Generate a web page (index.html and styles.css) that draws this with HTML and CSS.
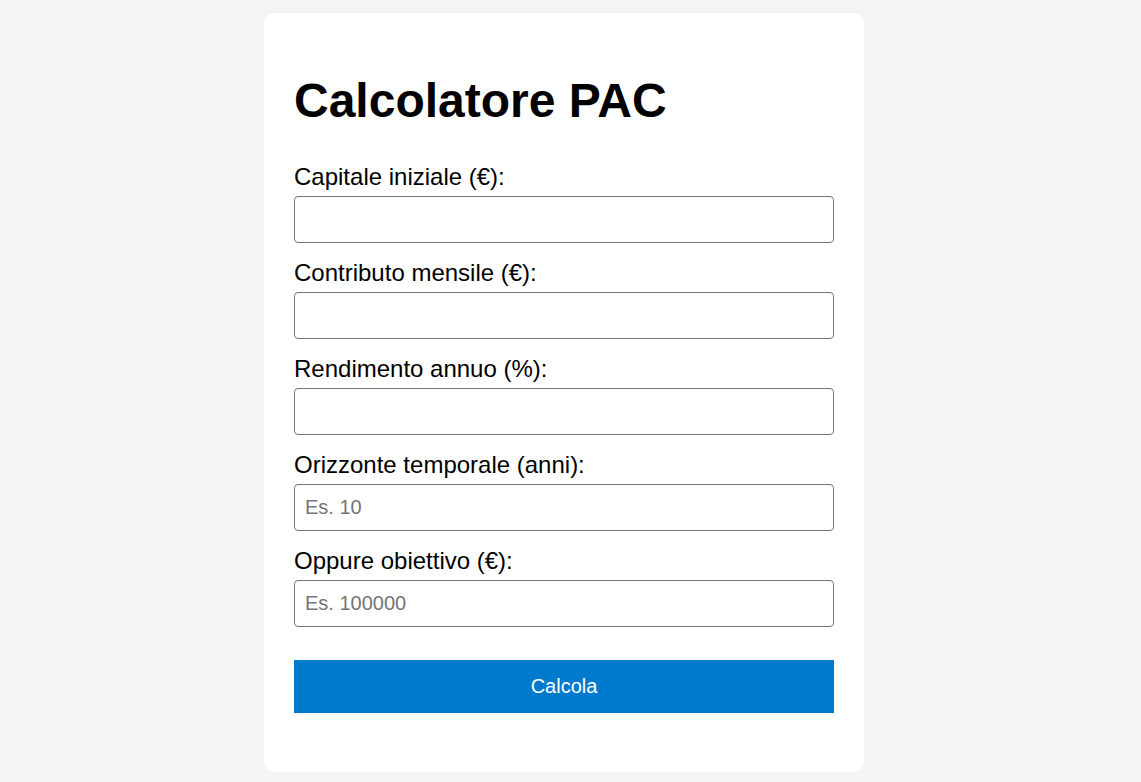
FILE: index.html
```html
<!DOCTYPE html>
<html lang="it">
<head>
<meta charset="utf-8">
<title>Calcolatore PAC</title>
<link rel="stylesheet" href="styles.css">
</head>
<body>
<main class="card">
  <h1 class="title">Calcolatore PAC</h1>
  <form class="form">
    <div class="field">
      <label class="label" for="capitale">Capitale iniziale (€):</label>
      <input class="input" id="capitale" type="number">
    </div>
    <div class="field">
      <label class="label" for="mensile">Contributo mensile (€):</label>
      <input class="input" id="mensile" type="number">
    </div>
    <div class="field">
      <label class="label" for="rendimento">Rendimento annuo (%):</label>
      <input class="input" id="rendimento" type="number">
    </div>
    <div class="field">
      <label class="label" for="anni">Orizzonte temporale (anni):</label>
      <input class="input" id="anni" type="number" placeholder="Es. 10">
    </div>
    <div class="field">
      <label class="label" for="obiettivo">Oppure obiettivo (€):</label>
      <input class="input" id="obiettivo" type="number" placeholder="Es. 100000">
    </div>
  </form>
  <button class="button" type="button">Calcola</button>
</main>
</body>
</html>
```

FILE: styles.css
```css
html, body {
  margin: 0;
  padding: 0;
}

body {
  background: #f4f4f4;
  font-family: "Liberation Sans", Arial, sans-serif;
  color: #000;
  padding: 13px 13px 0 0;
}

.card {
  box-sizing: border-box;
  width: 600px;
  margin: 0 auto;
  background: #ffffff;
  border-radius: 10px;
  padding: 30px 30px 30px;
}

.title {
  font-size: 48px;
  line-height: 55px;
  font-weight: bold;
  margin: 30px 0 35px;
}

.form {
  display: flex;
  flex-direction: column;
  gap: 16px;
}

.field {
  display: flex;
  flex-direction: column;
  gap: 5px;
}

.label {
  font-size: 24px;
  line-height: 28px;
}

.input {
  box-sizing: border-box;
  width: 100%;
  height: 47px;
  margin: 0;
  padding: 11px 10px;
  font-family: "Liberation Sans", Arial, sans-serif;
  font-size: 20px;
  line-height: 23px;
  border: 1px solid #767676;
  border-radius: 4px;
  background: #fff;
  color: #000;
}

.input::placeholder {
  color: #757575;
}

.input::-webkit-outer-spin-button,
.input::-webkit-inner-spin-button {
  -webkit-appearance: none;
  margin: 0;
}

.button {
  display: block;
  box-sizing: border-box;
  width: 100%;
  height: 53px;
  margin: 33px 0 29px;
  padding: 15px 10px;
  border: none;
  border-radius: 0;
  background: #007acc;
  color: #ffffff;
  font-family: "Liberation Sans", Arial, sans-serif;
  font-size: 20px;
  line-height: 23px;
  cursor: pointer;
}
```
